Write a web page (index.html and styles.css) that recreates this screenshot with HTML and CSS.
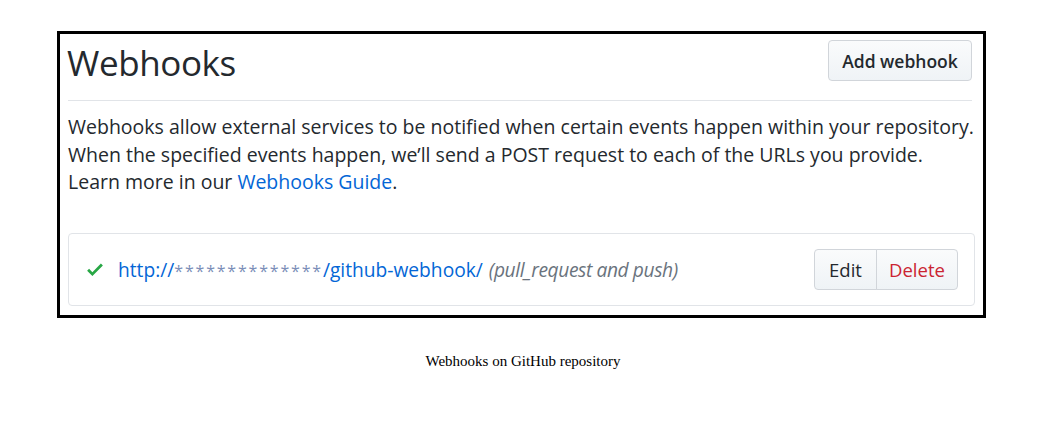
FILE: index.html
```html
<!DOCTYPE html>
<html lang="en">
<head>
<meta charset="utf-8">
<title>Webhooks</title>
<link rel="stylesheet" href="styles.css">
</head>
<body>
<div class="frame">
  <div class="header">
    <h1 class="title">Webhooks</h1>
    <button class="btn btn-add">Add webhook</button>
  </div>
  <p class="desc">Webhooks allow external services to be notified when certain events happen within your repository.<br>When the specified events happen, we’ll send a POST request to each of the URLs you provide.<br>Learn more in our <a class="link" href="#">Webhooks Guide</a>.</p>
  <div class="hook">
    <div class="hook-info">
      <svg class="check" viewBox="0 0 12 16" width="16" height="21" aria-hidden="true"><path fill="#28a745" d="M12 5l-8 8-4-4 1.5-1.5L4 10l6.5-6.5L12 5z"/></svg>
      <a class="hook-url" href="#">http://<span class="mask">**************</span>/github-webhook/</a>
      <span class="hook-events">(pull_request and push)</span>
    </div>
    <div class="btn-group">
      <button class="btn btn-edit">Edit</button>
      <button class="btn btn-delete">Delete</button>
    </div>
  </div>
</div>
<p class="caption">Webhooks on GitHub repository</p>
</body>
</html>
```
FILE: styles.css
```css
body {
  margin: 0;
  background: #fff;
  font-family: "Open Sans", "Noto Sans", sans-serif;
  color: #24292e;
}

.frame {
  box-sizing: border-box;
  width: 929px;
  height: 287px;
  margin: 31px 0 0 57px;
  border: 3px solid #000;
  padding: 6px 11px 0 8px;
}

.header {
  display: flex;
  justify-content: space-between;
  align-items: flex-start;
  padding-bottom: 19px;
  border-bottom: 1px solid #e1e4e8;
}

.title {
  margin: 5px 0 0 -1px;
  font-size: 35px;
  font-weight: 400;
  line-height: 1;
  letter-spacing: -0.4px;
  color: #24292e;
}

.btn {
  font-family: inherit;
  color: #24292e;
  background: linear-gradient(#fafbfc, #eff3f6);
  border: 1px solid #d1d5da;
  border-radius: 4px;
  cursor: pointer;
}

.btn-add {
  box-sizing: border-box;
  width: 144px;
  height: 41px;
  padding: 0;
  font-size: 17.5px;
  font-weight: 600;
}

.desc {
  margin: 12px 0 0 0;
  font-size: 19.5px;
  line-height: 27.7px;
  white-space: nowrap;
}

.link {
  color: #0366d6;
  text-decoration: none;
}

.hook {
  display: flex;
  justify-content: space-between;
  align-items: center;
  margin: 37px -3px 0 0;
  padding: 15px 16px 15px 18px;
  border: 1px solid #e1e4e8;
  border-radius: 4px;
}

.hook-info {
  display: flex;
  align-items: center;
  font-size: 19.2px;
  white-space: nowrap;
}

.check {
  display: block;
  margin-right: 15px;
}

.hook-url {
  color: #0366d6;
  text-decoration: none;
}

.mask {
  color: #7b8eb8;
  font-size: 16px;
  letter-spacing: 1.8px;
}

.hook-events {
  margin-left: 6px;
  font-style: italic;
  letter-spacing: -0.4px;
  color: #6a737d;
}

.btn-group {
  display: flex;
}

.btn-group .btn {
  box-sizing: border-box;
  height: 41px;
  padding: 0;
  font-size: 18.5px;
  font-weight: 400;
}

.btn-edit {
  width: 63px;
  border-radius: 4px 0 0 4px;
}

.btn-delete {
  width: 82px;
  margin-left: -1px;
  border-radius: 0 4px 4px 0;
}

.btn-group .btn-delete {
  color: #cb2431;
}

.caption {
  margin: 35px 0 0 0;
  text-align: center;
  font-family: "Liberation Serif", "Times New Roman", serif;
  font-size: 15px;
  color: #000;
}
```
